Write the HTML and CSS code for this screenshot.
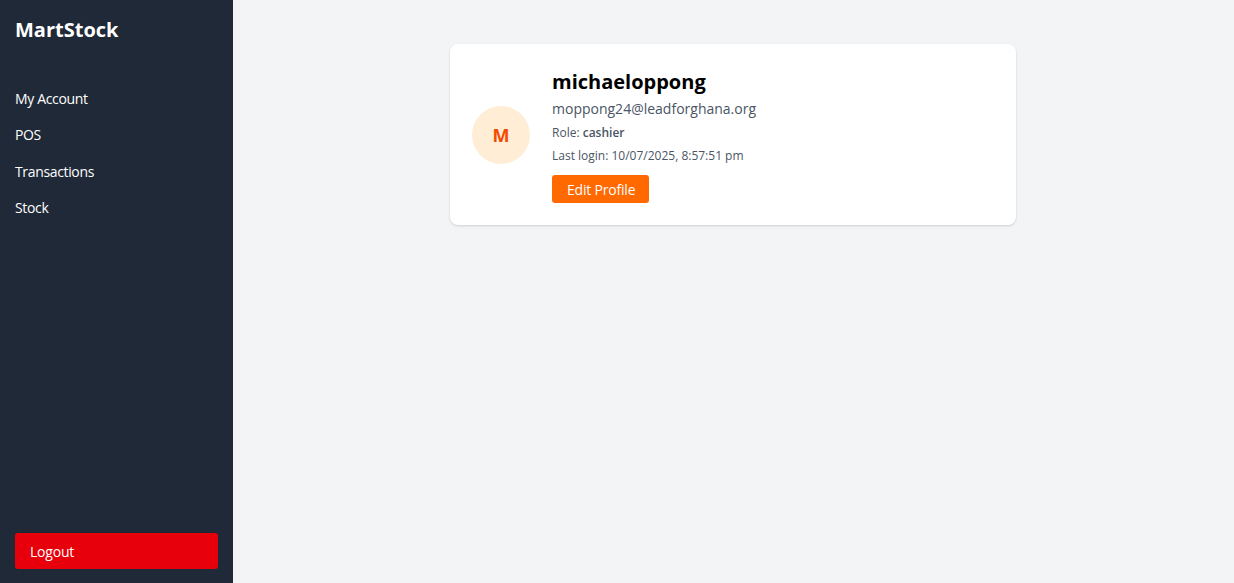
FILE: index.html
```html
<!DOCTYPE html>
<html lang="en">
<head>
<meta charset="utf-8">
<title>MartStock</title>
<link rel="stylesheet" href="styles.css">
</head>
<body>
<div class="app">
  <aside class="sidebar">
    <div class="brand">MartStock</div>
    <nav class="nav">
      <a class="nav-link" href="#">My Account</a>
      <a class="nav-link" href="#">POS</a>
      <a class="nav-link" href="#">Transactions</a>
      <a class="nav-link" href="#">Stock</a>
    </nav>
    <button class="logout">Logout</button>
  </aside>
  <main class="main">
    <section class="card">
      <div class="avatar">M</div>
      <div class="info">
        <h1 class="name">michaeloppong</h1>
        <p class="email">moppong24@leadforghana.org</p>
        <p class="meta">Role: <strong>cashier</strong></p>
        <p class="meta">Last login: 10/07/2025, 8:57:51 pm</p>
        <button class="edit">Edit Profile</button>
      </div>
    </section>
  </main>
</div>
</body>
</html>
```
FILE: styles.css
```css
* { box-sizing: border-box; }
html, body { margin: 0; padding: 0; height: 100%; }
body {
  font-family: "Open Sans", "Noto Sans", sans-serif;
  background: #f3f4f6;
  color: #101828;
}
.app { display: flex; height: 100vh; }
.sidebar {
  width: 233px;
  flex-shrink: 0;
  background: #1f2937;
  color: #fff;
  display: flex;
  flex-direction: column;
  padding: 15px 15px 14px 15px;
}
.brand {
  font-size: 20px;
  font-weight: 700;
  line-height: 30px;
}
.nav {
  display: flex;
  flex-direction: column;
  gap: 16.3px;
  margin-top: 44px;
  flex: 1;
}
.nav-link {
  color: #fff;
  text-decoration: none;
  font-size: 14px;
  line-height: 20px;
  letter-spacing: -0.35px;
}
.logout {
  width: 203px;
  height: 36px;
  background: #e7000b;
  color: #fff;
  border: none;
  border-radius: 3px;
  text-align: left;
  padding: 0 15px;
  font-family: inherit;
  font-size: 14px;
  letter-spacing: -0.2px;
}
.main {
  flex: 1;
  padding: 44px 1px 0 0;
  display: flex;
  justify-content: center;
  align-items: flex-start;
}
.card {
  width: 566px;
  background: #fff;
  border-radius: 8px;
  box-shadow: 0 1px 3px rgba(0,0,0,0.1), 0 1px 2px rgba(0,0,0,0.06);
  display: flex;
  align-items: center;
  gap: 22px;
  padding: 22px;
}
.avatar {
  width: 58px;
  height: 58px;
  border-radius: 50%;
  background: #ffedd5;
  color: #f54900;
  font-weight: 700;
  font-size: 18px;
  display: flex;
  align-items: center;
  justify-content: center;
  flex-shrink: 0;
}
.info {
  display: flex;
  flex-direction: column;
  align-items: flex-start;
  padding-top: 2px;
}
.name {
  margin: 0;
  font-size: 20px;
  line-height: 28px;
  font-weight: 700;
  color: #000;
}
.email {
  margin: 0;
  font-size: 14px;
  line-height: 25px;
  color: #4a5565;
}
.meta {
  margin: 0;
  font-size: 12px;
  line-height: 23px;
  color: #4a5565;
}
.meta strong { font-weight: 600; }
.edit {
  margin-top: 8px;
  height: 28px;
  padding: 0 14px 0 15px;
  background: #ff6900;
  color: #fff;
  border: none;
  border-radius: 3px;
  font-family: inherit;
  font-size: 14px;
  letter-spacing: -0.2px;
}
```
